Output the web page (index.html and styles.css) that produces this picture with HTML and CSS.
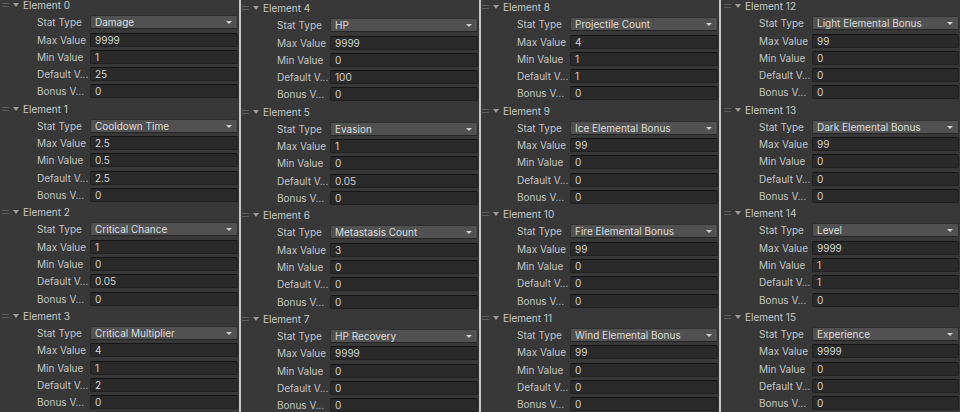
FILE: index.html
```html
<!DOCTYPE html>
<html lang="en">

<head>
    <meta charset="UTF-8">
    <meta name="viewport" content="width=device-width, initial-scale=1.0">
    <title>Stat Definitions</title>
    <link rel="stylesheet" href="styles.css">
</head>

<body>
    <div class="inspector">
        <div class="column first">
            <div class="list list-a">
                <div class="element-head"><span class="handle"></span><span class="fold"></span><span class="title">Element 0</span></div>
                <div class="row"><span class="label">Stat Type</span><span class="field dropdown">Damage</span></div>
                <div class="row"><span class="label">Max Value</span><span class="field">9999</span></div>
                <div class="row"><span class="label">Min Value</span><span class="field">1</span></div>
                <div class="row"><span class="label">Default V...</span><span class="field">25</span></div>
                <div class="row"><span class="label">Bonus V...</span><span class="field">0</span></div>

                <div class="element-head"><span class="handle"></span><span class="fold"></span><span class="title">Element 1</span></div>
                <div class="row"><span class="label">Stat Type</span><span class="field dropdown">Cooldown Time</span></div>
                <div class="row"><span class="label">Max Value</span><span class="field">2.5</span></div>
                <div class="row"><span class="label">Min Value</span><span class="field">0.5</span></div>
                <div class="row"><span class="label">Default V...</span><span class="field">2.5</span></div>
                <div class="row"><span class="label">Bonus V...</span><span class="field">0</span></div>

                <div class="element-head"><span class="handle"></span><span class="fold"></span><span class="title">Element 2</span></div>
                <div class="row"><span class="label">Stat Type</span><span class="field dropdown">Critical Chance</span></div>
                <div class="row"><span class="label">Max Value</span><span class="field">1</span></div>
                <div class="row"><span class="label">Min Value</span><span class="field">0</span></div>
                <div class="row"><span class="label">Default V...</span><span class="field">0.05</span></div>
                <div class="row"><span class="label">Bonus V...</span><span class="field">0</span></div>

                <div class="element-head"><span class="handle"></span><span class="fold"></span><span class="title">Element 3</span></div>
                <div class="row"><span class="label">Stat Type</span><span class="field dropdown">Critical Multiplier</span></div>
                <div class="row"><span class="label">Max Value</span><span class="field">4</span></div>
                <div class="row"><span class="label">Min Value</span><span class="field">1</span></div>
                <div class="row"><span class="label">Default V...</span><span class="field">2</span></div>
                <div class="row"><span class="label">Bonus V...</span><span class="field">0</span></div>
            </div>
        </div>

        <div class="column">
            <div class="list list-b">
                <div class="element-head"><span class="handle"></span><span class="fold"></span><span class="title">Element 4</span></div>
                <div class="row"><span class="label">Stat Type</span><span class="field dropdown">HP</span></div>
                <div class="row"><span class="label">Max Value</span><span class="field">9999</span></div>
                <div class="row"><span class="label">Min Value</span><span class="field">0</span></div>
                <div class="row"><span class="label">Default V...</span><span class="field">100</span></div>
                <div class="row"><span class="label">Bonus V...</span><span class="field">0</span></div>

                <div class="element-head"><span class="handle"></span><span class="fold"></span><span class="title">Element 5</span></div>
                <div class="row"><span class="label">Stat Type</span><span class="field dropdown">Evasion</span></div>
                <div class="row"><span class="label">Max Value</span><span class="field">1</span></div>
                <div class="row"><span class="label">Min Value</span><span class="field">0</span></div>
                <div class="row"><span class="label">Default V...</span><span class="field">0.05</span></div>
                <div class="row"><span class="label">Bonus V...</span><span class="field">0</span></div>

                <div class="element-head"><span class="handle"></span><span class="fold"></span><span class="title">Element 6</span></div>
                <div class="row"><span class="label">Stat Type</span><span class="field dropdown">Metastasis Count</span></div>
                <div class="row"><span class="label">Max Value</span><span class="field">3</span></div>
                <div class="row"><span class="label">Min Value</span><span class="field">0</span></div>
                <div class="row"><span class="label">Default V...</span><span class="field">0</span></div>
                <div class="row"><span class="label">Bonus V...</span><span class="field">0</span></div>

                <div class="element-head"><span class="handle"></span><span class="fold"></span><span class="title">Element 7</span></div>
                <div class="row"><span class="label">Stat Type</span><span class="field dropdown">HP Recovery</span></div>
                <div class="row"><span class="label">Max Value</span><span class="field">9999</span></div>
                <div class="row"><span class="label">Min Value</span><span class="field">0</span></div>
                <div class="row"><span class="label">Default V...</span><span class="field">0</span></div>
                <div class="row"><span class="label">Bonus V...</span><span class="field">0</span></div>
            </div>
        </div>

        <div class="column">
            <div class="list list-c">
                <div class="element-head"><span class="handle"></span><span class="fold"></span><span class="title">Element 8</span></div>
                <div class="row"><span class="label">Stat Type</span><span class="field dropdown">Projectile Count</span></div>
                <div class="row"><span class="label">Max Value</span><span class="field">4</span></div>
                <div class="row"><span class="label">Min Value</span><span class="field">1</span></div>
                <div class="row"><span class="label">Default V...</span><span class="field">1</span></div>
                <div class="row"><span class="label">Bonus V...</span><span class="field">0</span></div>

                <div class="element-head"><span class="handle"></span><span class="fold"></span><span class="title">Element 9</span></div>
                <div class="row"><span class="label">Stat Type</span><span class="field dropdown">Ice Elemental Bonus</span></div>
                <div class="row"><span class="label">Max Value</span><span class="field">99</span></div>
                <div class="row"><span class="label">Min Value</span><span class="field">0</span></div>
                <div class="row"><span class="label">Default V...</span><span class="field">0</span></div>
                <div class="row"><span class="label">Bonus V...</span><span class="field">0</span></div>

                <div class="element-head"><span class="handle"></span><span class="fold"></span><span class="title">Element 10</span></div>
                <div class="row"><span class="label">Stat Type</span><span class="field dropdown">Fire Elemental Bonus</span></div>
                <div class="row"><span class="label">Max Value</span><span class="field">99</span></div>
                <div class="row"><span class="label">Min Value</span><span class="field">0</span></div>
                <div class="row"><span class="label">Default V...</span><span class="field">0</span></div>
                <div class="row"><span class="label">Bonus V...</span><span class="field">0</span></div>

                <div class="element-head"><span class="handle"></span><span class="fold"></span><span class="title">Element 11</span></div>
                <div class="row"><span class="label">Stat Type</span><span class="field dropdown">Wind Elemental Bonus</span></div>
                <div class="row"><span class="label">Max Value</span><span class="field">99</span></div>
                <div class="row"><span class="label">Min Value</span><span class="field">0</span></div>
                <div class="row"><span class="label">Default V...</span><span class="field">0</span></div>
                <div class="row"><span class="label">Bonus V...</span><span class="field">0</span></div>
            </div>
        </div>

        <div class="column">
            <div class="list list-d">
                <div class="element-head"><span class="handle"></span><span class="fold"></span><span class="title">Element 12</span></div>
                <div class="row"><span class="label">Stat Type</span><span class="field dropdown">Light Elemental Bonus</span></div>
                <div class="row"><span class="label">Max Value</span><span class="field">99</span></div>
                <div class="row"><span class="label">Min Value</span><span class="field">0</span></div>
                <div class="row"><span class="label">Default V...</span><span class="field">0</span></div>
                <div class="row"><span class="label">Bonus V...</span><span class="field">0</span></div>

                <div class="element-head"><span class="handle"></span><span class="fold"></span><span class="title">Element 13</span></div>
                <div class="row"><span class="label">Stat Type</span><span class="field dropdown">Dark Elemental Bonus</span></div>
                <div class="row"><span class="label">Max Value</span><span class="field">99</span></div>
                <div class="row"><span class="label">Min Value</span><span class="field">0</span></div>
                <div class="row"><span class="label">Default V...</span><span class="field">0</span></div>
                <div class="row"><span class="label">Bonus V...</span><span class="field">0</span></div>

                <div class="element-head"><span class="handle"></span><span class="fold"></span><span class="title">Element 14</span></div>
                <div class="row"><span class="label">Stat Type</span><span class="field dropdown">Level</span></div>
                <div class="row"><span class="label">Max Value</span><span class="field">9999</span></div>
                <div class="row"><span class="label">Min Value</span><span class="field">1</span></div>
                <div class="row"><span class="label">Default V...</span><span class="field">1</span></div>
                <div class="row"><span class="label">Bonus V...</span><span class="field">0</span></div>

                <div class="element-head"><span class="handle"></span><span class="fold"></span><span class="title">Element 15</span></div>
                <div class="row"><span class="label">Stat Type</span><span class="field dropdown">Experience</span></div>
                <div class="row"><span class="label">Max Value</span><span class="field">9999</span></div>
                <div class="row"><span class="label">Min Value</span><span class="field">0</span></div>
                <div class="row"><span class="label">Default V...</span><span class="field">0</span></div>
                <div class="row"><span class="label">Bonus V...</span><span class="field">0</span></div>
            </div>
        </div>
    </div>
</body>

</html>
```

FILE: styles.css
```css
body {
    margin: 0;
    background-color: #383838;
    font-family: Inter, "Noto Sans", sans-serif;
    font-size: 10px;
    color: #c4c4c4;
    height: 412px;
    overflow: hidden;
}

.inspector {
    display: flex;
    margin-left: -1px;
    height: 412px;
}

.column {
    flex: none;
    width: 238px;
    border-left: 2px solid #c6c6c6;
    overflow: hidden;
}

.column.first {
    border-left-color: transparent;
}

.list {
    display: flex;
    flex-direction: column;
}

/* each screenshot was scrolled a little differently */
.list-a { margin-top: -3.6px; }
.list-b { margin-top: -0.6px; }
.list-c { margin-top: -1.6px; }
.list-d { margin-top: -2.6px; padding-left: 2px; }

.element-head,
.row {
    height: 17.27px;
    display: flex;
    align-items: center;
    flex: none;
}

.element-head {
    padding-left: 1px;
}

.handle {
    width: 7px;
    height: 4px;
    box-sizing: border-box;
    border-top: 1px solid #5e5e5e;
    border-bottom: 1px solid #5e5e5e;
}

.fold {
    margin-left: 4px;
    width: 0;
    height: 0;
    border-left: 3px solid transparent;
    border-right: 3px solid transparent;
    border-top: 4px solid #9c9c9c;
}

.title {
    margin-left: 4px;
    color: #c8c8c8;
}

.row {
    padding-left: 36px;
}

.label {
    width: 53px;
    flex: none;
    white-space: nowrap;
}

.field {
    width: 148px;
    height: 14px;
    box-sizing: border-box;
    padding-left: 4px;
    line-height: 12px;
    background-color: #2a2a2a;
    border: 1px solid #212121;
    border-top-color: #151515;
    border-radius: 2px;
    color: #d2d2d2;
    white-space: nowrap;
}

.dropdown {
    position: relative;
    background-color: #515151;
    border-color: #303030;
    border-bottom-color: #262626;
    color: #dcdcdc;
}

.dropdown::after {
    content: "";
    position: absolute;
    right: 5px;
    top: 5px;
    border-left: 3px solid transparent;
    border-right: 3px solid transparent;
    border-top: 3px solid #d0d0d0;
}
```
